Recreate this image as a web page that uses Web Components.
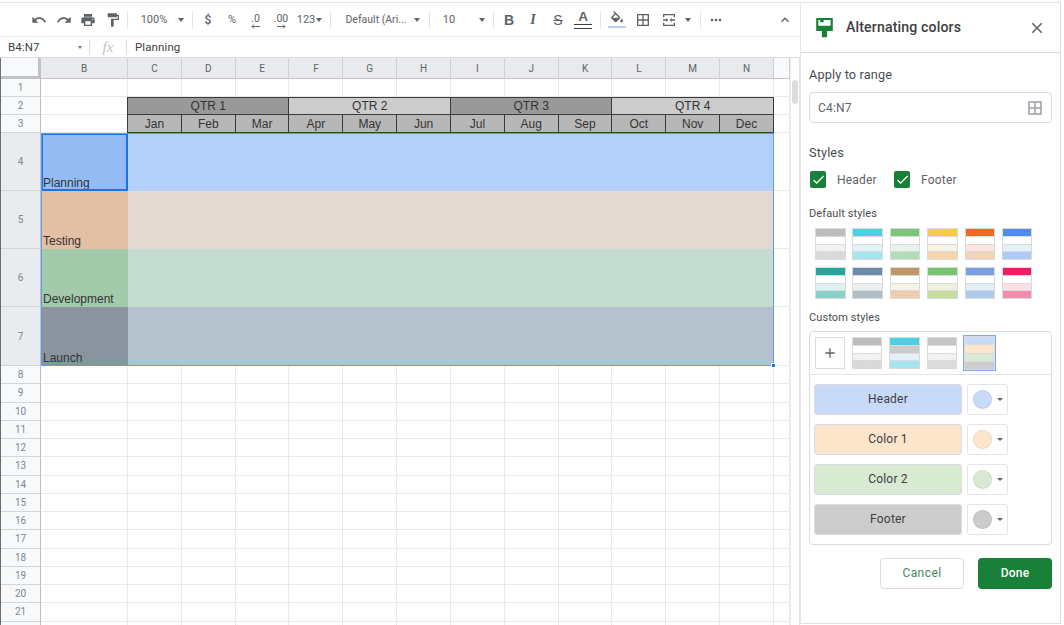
<!DOCTYPE html>
<html>
<head>
<meta charset="utf-8">
<title>Alternating colors</title>
<style>
  html, body { margin: 0; height: 100%; background: #fff; overflow: hidden; }
  sheets-app { width: 1064px; height: 625px; }
</style>
</head>
<body>
<sheets-app></sheets-app>
<script>
const ICONS = {
  undo: 'M12.5 8c-2.65 0-5.05.99-6.9 2.6L2 7v9h9l-3.62-3.62c1.39-1.16 3.16-1.88 5.12-1.88 3.54 0 6.55 2.31 7.6 5.5l2.37-.78C21.08 11.03 17.15 8 12.5 8z',
  redo: 'M18.4 10.6C16.55 8.99 14.15 8 11.5 8c-4.65 0-8.58 3.03-9.96 7.22L3.9 16c1.05-3.19 4.05-5.5 7.6-5.5 1.95 0 3.73.72 5.12 1.88L13 16h9V7l-3.6 3.6z',
  print: 'M19 8H5c-1.66 0-3 1.34-3 3v6h4v4h12v-4h4v-6c0-1.66-1.34-3-3-3zm-3 11H8v-5h8v5zm3-7c-.55 0-1-.45-1-1s.45-1 1-1 1 .45 1 1-.45 1-1 1zm-1-9H6v4h12V3z',
  paint: 'M18 4V3c0-.55-.45-1-1-1H5c-.55 0-1 .45-1 1v4c0 .55.45 1 1 1h12c.55 0 1-.45 1-1V6h1v4H9v11c0 .55.45 1 1 1h2c.55 0 1-.45 1-1v-9h8V4h-3z',
  fill: 'M16.56 8.94L7.62 0 6.21 1.41l2.38 2.38-5.15 5.15c-.59.59-.59 1.54 0 2.12l5.5 5.5c.29.29.68.44 1.06.44s.77-.15 1.06-.44l5.5-5.5c.59-.58.59-1.53 0-2.12zM5.21 10L10 5.21 14.79 10H5.21zM19 11.5s-2 2.17-2 3.5c0 1.1.9 2 2 2s2-.9 2-2c0-1.33-2-3.5-2-3.5z',
  borders: 'M3 3v18h18V3H3zm8 16H5v-6h6v6zm0-8H5V5h6v6zm8 8h-6v-6h6v6zm0-8h-6V5h6v6z',
  merge: 'M3 3h18v5h-2V5H5v3H3V3zm0 13h2v3h14v-3h2v5H3v-5zM3 11h5V9l3 3-3 3v-2H3v-2zm18 0h-5V9l-3 3 3 3v-2h5v-2z',
  close: 'M19 6.41L17.59 5 12 10.59 6.41 5 5 6.41 10.59 12 5 17.59 6.41 19 12 13.41 17.59 19 19 17.59 13.41 12z',
  check: 'M9 16.2L4.8 12l-1.4 1.4L9 19 21 7l-1.4-1.4z',
  chevron: 'M7.41 15.41L12 10.83l4.59 4.58L18 14l-6-6-6 6z',
  more: 'M6 10a2 2 0 100 4 2 2 0 000-4zm12 0a2 2 0 100 4 2 2 0 000-4zm-6 0a2 2 0 100 4 2 2 0 000-4z',
  brand: 'M2.5 1h19v15h-19zM5 3.5v6.5h14V3.5h-8v2.5H7V3.5zM9 16h6v7H9z',
  plus: 'M19 13h-6v6h-2v-6H5v-2h6V5h2v6h6v2z'
};

function svg(name, size, color) {
  return `<svg width="${size}" height="${size}" viewBox="0 0 24 24" fill="${color || '#5f6368'}"><path d="${ICONS[name]}"/></svg>`;
}

class StyleSwatch extends HTMLElement {
  connectedCallback() {
    const strips = this.getAttribute('colors').split(',').map(c => {
      const dotted = c.endsWith('*');
      return `<i class="${dotted ? 'dots' : ''}" style="background-color:${c.replace('*', '')}"></i>`;
    }).join('');
    this.attachShadow({ mode: 'open' }).innerHTML = `
      <style>
        :host { display: flex; flex-direction: column; gap: 1px; box-sizing: border-box; width: 30.5px; height: 32px; padding: 1px; background: #dadada; }
        :host([selected]) { width: 33px; height: 36px; padding: 2px; background: #dadce0; box-shadow: inset 0 0 0 1px #79abf2; }
        i { flex: 1; display: block; }
        .dots { background-image: radial-gradient(rgba(110,110,110,.09) .6px, transparent .8px); background-size: 3px 3px; }
      </style>${strips}`;
  }
}
customElements.define('style-swatch', StyleSwatch);

class ColorRow extends HTMLElement {
  connectedCallback() {
    const color = this.getAttribute('color');
    const root = this.attachShadow({ mode: 'open' });
    root.innerHTML = `
      <style>
        :host { display: flex; gap: 5px; height: 31px; }
        .name { width: 148px; box-sizing: border-box; border: 1px solid #dadce0; border-radius: 3px; display: flex; align-items: center; justify-content: center; padding-bottom: 2px; font: 12px Roboto, sans-serif; letter-spacing: .2px; color: #3c4043; }
        .pick { width: 41px; box-sizing: border-box; border: 1px solid #e3e4e6; border-radius: 3px; display: flex; align-items: center; padding-left: 5px; gap: 5px; }
        .dot { width: 19px; height: 19px; border-radius: 50%; box-sizing: border-box; border: 1px solid rgba(0,0,0,.06); }
        .arrow { width: 0; height: 0; border: 3px solid transparent; border-top: 3.5px solid #5f6368; border-bottom: 0; }
      </style>
      <div class="name" style="background:${color}"><slot></slot></div>
      <div class="pick"><div class="dot" style="background:${color}"></div><div class="arrow"></div></div>`;
  }
}
customElements.define('color-row', ColorRow);

class AltPanel extends HTMLElement {
  constructor() {
    super();
    const defaults = [
      '#bdbdbd*,#fff,#f3f3f3*,#dadada*', '#4dd0e1,#fff,#e0f2f7,#a5e6ee', '#79c879*,#fff,#e8f5ee*,#b2dfb8*',
      '#f7cb4d,#fff,#f7f4e3,#f8d7b0*', '#f46524,#fff,#fde3de,#f2d3b5', '#4c8ee8*,#fff,#e3f2f8,#aecbfa*',
      '#26a69a,#fff,#e0f2f1*,#8bd0c8', '#6b8ba8*,#fff,#eceff1,#b0bec5*', '#bf9768*,#fff,#f5f3e3,#efcdb0*',
      '#79c470*,#fff,#f1f3e0*,#c5de9e', '#7c9fde*,#fff,#e1f0f8,#aecbee*', '#ea1e63,#fff,#fde0e3,#f48cae'
    ].map(c => `<style-swatch colors="${c}"></style-swatch>`).join('');
    this.attachShadow({ mode: 'open' }).innerHTML = `
      <style>
        :host { display: block; box-sizing: border-box; width: 261px; height: 621px; margin-top: 3px; border-left: 1px solid #e6e6e6; border-right: 1px solid #dadce0; border-bottom: 1px solid #e0e0e0; background: #fff; font-family: Roboto, sans-serif; color: #3c4043; }
        header { height: 50px; box-sizing: border-box; border-bottom: 1px solid #dadce0; display: flex; align-items: center; padding: 0 14px 0 13px; }
        header svg.brand { margin-right: 11px; margin-top: -1px; }
        h1 { flex: 1; margin: 0 0 2px; font: 500 14.1px Roboto, sans-serif; letter-spacing: .15px; color: #3c4043; }
        .body { padding: 0 8px; }
        .label { font-size: 12.7px; letter-spacing: .15px; color: #484c50; line-height: 16px; }
        .small { font-size: 11px; letter-spacing: .1px; line-height: 14px; }
        .range { height: 31px; box-sizing: border-box; margin-top: 9px; border: 1px solid #dadce0; border-radius: 4px; display: flex; align-items: center; justify-content: space-between; padding: 0 7px 0 8px; font-size: 12px; letter-spacing: .2px; color: #5f6368; }
        .checks { display: flex; align-items: center; margin-top: 10px; font-size: 12px; letter-spacing: .2px; color: #5f6368; }
        .box { width: 16px; height: 17px; border-radius: 2px; background: #188038; display: flex; align-items: center; justify-content: center; margin: 0 11px 0 1px; }
        .defaults { display: grid; grid-template-columns: repeat(6, 30.5px); column-gap: 6.9px; row-gap: 7px; padding: 7px 0 0 6px; }
        .custom { margin-top: 6px; height: 214px; box-sizing: border-box; border: 1px solid #dadce0; border-radius: 4px; }
        .saved { display: flex; align-items: center; height: 43px; box-sizing: border-box; padding: 0 5px; gap: 6.9px; border-bottom: 1px solid #e3e4e6; }
        .add { width: 30px; height: 32px; box-sizing: border-box; border: 1px solid #dadce0; display: flex; align-items: center; justify-content: center; }
        .rows { display: flex; flex-direction: column; gap: 9px; padding: 9px 4px; }
        .actions { display: flex; justify-content: flex-end; gap: 14px; margin-top: 13px; }
        .btn { height: 31px; box-sizing: border-box; border-radius: 4px; display: flex; align-items: center; justify-content: center; padding-bottom: 1px; font: 500 12px Roboto, sans-serif; letter-spacing: .25px; }
        .cancel { width: 84px; border: 1px solid #dadce0; color: #3f8a5e; font-weight: 400; letter-spacing: .45px; }
        .done { width: 74px; background: #188038; color: #fff; }
      </style>
      <header>
        <svg class="brand" width="21" height="21" viewBox="0 0 24 24" fill="#188038"><path fill-rule="evenodd" d="${ICONS.brand}"/></svg>
        <h1>Alternating colors</h1>
        ${svg('close', 18)}
      </header>
      <div class="body">
        <div class="label" style="margin-top:14px">Apply to range</div>
        <div class="range">C4:N7 ${svg('borders', 18, '#9aa0a6')}</div>
        <div class="label" style="margin-top:22px">Styles</div>
        <div class="checks">
          <div class="box">${svg('check', 15, '#fff')}</div><span style="width:56px">Header</span>
          <div class="box">${svg('check', 15, '#fff')}</div><span>Footer</span>
        </div>
        <div class="label small" style="margin-top:19px">Default styles</div>
        <div class="defaults">${defaults}</div>
        <div class="label small" style="margin-top:12px">Custom styles</div>
        <div class="custom">
          <div class="saved">
            <div class="add">${svg('plus', 16)}</div>
            <style-swatch colors="#bdbdbd*,#fff,#f3f3f3*,#dadada*"></style-swatch>
            <style-swatch colors="#4dd0e1,#cccccc*,#e0f2f7,#a5e6ee"></style-swatch>
            <style-swatch colors="#c4c4c4,#fff,#f3f3f3*,#dcdcdc"></style-swatch>
            <style-swatch selected colors="#c9daf8,#fce5cd,#d9ead3,#cccccc" style="margin-left:-1px"></style-swatch>
          </div>
          <div class="rows">
            <color-row color="#c9daf8">Header</color-row>
            <color-row color="#fde5cc">Color 1</color-row>
            <color-row color="#d9ead3">Color 2</color-row>
            <color-row color="#cccccc">Footer</color-row>
          </div>
        </div>
        <div class="actions">
          <div class="btn cancel">Cancel</div>
          <div class="btn done">Done</div>
        </div>
      </div>`;
  }
}
customElements.define('alt-panel', AltPanel);

class SheetToolbar extends HTMLElement {
  constructor() {
    super();
    // items are listed by their centre on the toolbar, the gaps are worked out from that
    let cursor = 0;
    const at = (center, width, html, cls, css) => {
      const left = center - width / 2 - cursor;
      cursor = center + width / 2;
      return `<span class="${cls || 'i'}" style="width:${width}px;margin-left:${left}px;${css || ''}">${html}</span>`;
    };
    const ic = (center, n) => at(center, 16, svg(n, 16));
    const caret = center => at(center, 7, '<b class="c"></b>');
    const sep = center => at(center, 1, '', 's');
    const arrow = d => `<svg width="9" height="5" viewBox="0 0 9 5" fill="none" stroke="#5f6368"><path d="${d}"/></svg>`;
    this.attachShadow({ mode: 'open' }).innerHTML = `
      <style>
        :host { display: flex; align-items: center; box-sizing: border-box; height: 34px; border-bottom: 1px solid #e8eaed; font: 11px Roboto, sans-serif; color: #5f6368; overflow: hidden; }
        span { flex: none; }
        .i { display: flex; align-items: center; justify-content: center; white-space: nowrap; }
        .c { width: 0; height: 0; border: 3.5px solid transparent; border-top: 4px solid #5f6368; border-bottom: 0; }
        .s { height: 18px; background: #e3e4e6; }
        .a { font: 700 13.5px "Liberation Sans", sans-serif; flex-direction: column; line-height: 12px; }
        .a u { display: block; width: 18px; height: 3px; margin-top: 1px; border-top: 1px solid #3c4043; border-bottom: 1px solid #3c4043; }
        .fillbar { flex-direction: column; }
        .fillbar u { display: block; width: 18px; height: 2px; background: #b7d0f7; margin-top: -1px; }
        .sub { font-size: 10.5px; flex-direction: column; line-height: 10px; padding-top: 3px; }
      </style>
      ${ic(39, 'undo')}${ic(64, 'redo')}${ic(88, 'print')}${ic(113, 'paint')}${sep(127.5)}
      ${at(154, 30, '100%')}${caret(181)}${sep(192.5)}
      ${at(208, 14, '$', 'i', 'font-weight:500;font-size:12px')}${at(232, 14, '%')}
      ${at(255.5, 16, '.0' + arrow('M9 2.5H1M3 .5l-2 2 2 2'), 'i sub')}${at(281, 18, '.00' + arrow('M0 2.5h8M6 .5l2 2-2 2'), 'i sub')}
      ${at(306, 20, '123')}${caret(319)}${sep(330.5)}
      ${at(376, 64, 'Default (Ari...', 'i', 'font-size:10.5px')}${caret(417)}${sep(429.5)}
      ${at(449, 14, '10')}${caret(482)}${sep(493.5)}
      ${at(509, 16, 'B', 'i', "font:700 14px 'Liberation Sans',sans-serif")}
      ${at(533, 16, 'I', 'i', "font:italic 700 14px 'Liberation Serif',serif")}
      ${at(558, 16, 'S', 'i', "font:14px 'Liberation Sans',sans-serif;text-decoration:line-through")}
      ${at(583, 18, 'A<u></u>', 'i a')}${sep(600.5)}
      ${at(617, 18, svg('fill', 16) + '<u></u>', 'i fillbar')}${ic(643, 'borders')}${ic(669, 'merge')}${caret(688)}${sep(700.5)}
      ${ic(716, 'more')}${ic(785, 'chevron')}`;
  }
}
customElements.define('sheet-toolbar', SheetToolbar);

class FormulaBar extends HTMLElement {
  constructor() {
    super();
    this.attachShadow({ mode: 'open' }).innerHTML = `
      <style>
        :host { display: flex; align-items: center; box-sizing: border-box; height: 21px; border-bottom: 1px solid #dadce0; font: 11.5px Roboto, sans-serif; color: #3c4043; letter-spacing: .1px; }
        .name { width: 78px; padding-left: 8px; box-sizing: border-box; flex: none; }
        .c { width: 0; height: 0; border: 2.5px solid transparent; border-top: 3px solid #777; border-bottom: 0; margin-right: 7px; }
        .s { width: 1px; height: 15px; background: #dadce0; flex: none; }
        .fx { width: 36px; text-align: center; font: italic 15px "Liberation Serif", serif; color: #bdc1c6; flex: none; }
        .val { padding-left: 8px; }
      </style>
      <span class="name">B4:N7</span><b class="c"></b><span class="s"></span>
      <span class="fx">fx</span><span class="s"></span>
      <span class="val">Planning</span>`;
  }
}
customElements.define('formula-bar', FormulaBar);

class SheetGrid extends HTMLElement {
  constructor() {
    super();
    const cols = 'BCDEFGHIJKLMN'.split('');
    const heights = { 4: 58, 5: 58, 6: 58, 7: 59 };
    let rows = '21px';
    for (let r = 1; r <= 22; r++) rows += r > 7 ? ' 18.25px' : ' ' + (heights[r] || 18) + 'px';

    // every cell gets its own place so the selection can share grid areas with the cells
    const cell = (row, col, cls, text, extra) =>
      `<div class="cell ${cls}" style="grid-row:${row};grid-column:${col};${extra || ''}">${text || ''}</div>`;

    let html = cell(1, 1, 'corner');
    cols.forEach((c, i) => { html += cell(1, i + 2, 'ch', c); });
    html += cell(1, 15, 'ch pale');
    html += '<div class="bar" style="grid-column:16;grid-row:1/-1"><i></i></div>';

    const quarters = ['QTR 1', 'QTR 2', 'QTR 3', 'QTR 4'];
    const months = ['Jan','Feb','Mar','Apr','May','Jun','Jul','Aug','Sep','Oct','Nov','Dec'];
    const names = { 4: ['Planning', '#95bbf3', '#b4cff8'], 5: ['Testing', '#e3bfa3', '#e3d9d0'], 6: ['Development', '#a3cbab', '#c5dcd2'], 7: ['Launch', '#8a949f', '#b6c1ce'] };

    for (let r = 1; r <= 22; r++) {
      const row = r + 1;
      const sel = r >= 4 && r <= 7;
      html += cell(row, 1, 'rh' + (sel ? ' on' : ''), r <= 21 ? r : '');
      if (sel) {
        const [name, bg, fill] = names[r];
        html += cell(row, 2, 'text', name, `background:${bg}`);
        html += cell(row, '3/15', '', '', `background:${fill};border:0`);
      } else if (r === 2) {
        html += cell(row, 2, '');
        quarters.forEach((q, i) => {
          html += cell(row, `${3 + i * 3}/span 3`, 'q', q, `background:${i % 2 ? '#ccc' : '#999'}`);
        });
      } else if (r === 3) {
        html += cell(row, 2, '');
        months.forEach((m, i) => { html += cell(row, i + 3, 'm', m); });
      } else {
        cols.forEach((c, i) => { html += cell(row, i + 2, ''); });
      }
      html += cell(row, 15, '');
    }
    html += '<div class="range" style="grid-column:2/15;grid-row:5/9"><b></b></div>';
    html += '<div class="active" style="grid-column:2;grid-row:5"></div>';

    this.attachShadow({ mode: 'open' }).innerHTML = `
      <style>
        :host { display: grid; grid-template-columns: 40px 87px repeat(12, 53.833px) 16px 10px; grid-template-rows: ${rows}; border-left: 1px solid #6b6e72; height: 567px; overflow: hidden; font: 12px "Liberation Sans", sans-serif; color: #333; }
        .cell { box-sizing: border-box; border-right: 1px solid #e8e9ea; border-bottom: 1px solid #e8e9ea; display: flex; align-items: center; justify-content: center; min-width: 0; overflow: hidden; white-space: nowrap; }
        .ch { background: #e8eaed; border-right-color: #cfd1d4; border-bottom-color: #c0c2c5; font: 10px Roboto, sans-serif; color: #5f6368; }
        .ch.pale { background: #f8f9fa; }
        .corner { background: #f8f9fa; border-right: 3px solid #c0c2c5; border-bottom: 3px solid #c0c2c5; }
        .rh { background: #f8f9fa; border-right-color: #bdbfc2; border-bottom-color: #d4d5d7; font: 10px Roboto, sans-serif; color: #80868b; }
        .rh.on { background: #e9ebee; }
        .text { border: 0; align-items: flex-end; justify-content: flex-start; padding: 0 0 1px 2px; }
        .q { border: 1px solid #3a3a3a; margin-left: -1px; width: calc(100% + 1px); color: #333; }
        .m { background: #b7b7b7; border: 1px solid #3a3a3a; border-top: 0; margin-left: -1px; width: calc(100% + 1px); color: #333; }
        .bar { border-left: 1px solid #eceded; border-right: 1px solid #e0e0e0; background: #fff; padding: 22px 1px 0; box-sizing: border-box; }
        .bar i { display: block; height: 24px; border-radius: 4px; background: #dadce0; }
        .range { position: relative; border: 1px solid #5b9bf0; box-sizing: border-box; }
        .range b { position: absolute; right: -3px; bottom: -3px; width: 5px; height: 5px; background: #1a73e8; border: 1px solid #fff; box-sizing: border-box; }
        .active { border: 2px solid #1a73e8; box-sizing: border-box; }
      </style>${html}`;
  }
}
customElements.define('sheet-grid', SheetGrid);

class SheetsApp extends HTMLElement {
  constructor() {
    super();
    this.attachShadow({ mode: 'open' }).innerHTML = `
      <style>
        :host { display: flex; position: relative; background: #fff; }
        .main { width: 800px; flex: none; padding-top: 3px; box-sizing: border-box; }
        .top { position: absolute; left: 0; top: 2px; width: 1061px; height: 1px; background: #e4e4e4; }
      </style>
      <div class="top"></div>
      <div class="main">
        <sheet-toolbar></sheet-toolbar>
        <formula-bar></formula-bar>
        <sheet-grid></sheet-grid>
      </div>
      <alt-panel></alt-panel>`;
  }
}
customElements.define('sheets-app', SheetsApp);
</script>
</body>
</html>
